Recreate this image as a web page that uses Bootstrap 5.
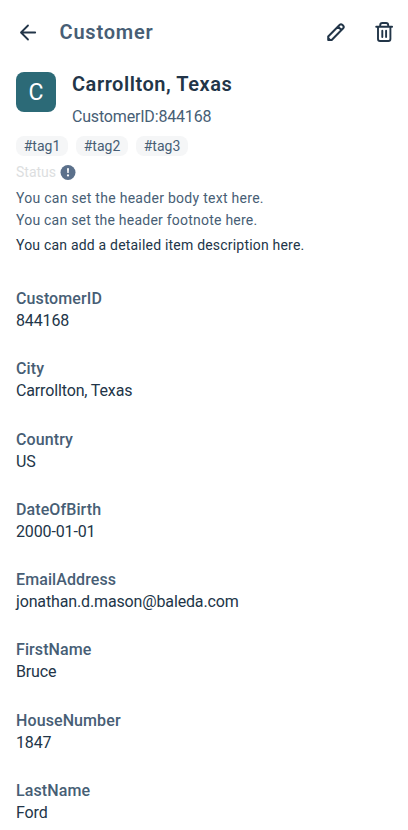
<!DOCTYPE html>
<html lang="en">
<head>
<meta charset="utf-8">
<meta name="viewport" content="width=device-width, initial-scale=1">
<title>Customer</title>
<link href="https://cdn.jsdelivr.net/npm/bootstrap@5.3.0/dist/css/bootstrap.min.css" rel="stylesheet">
<style>
:root{--ink:#223548;--slate:#475e75}
html,body{height:830px;overflow:hidden}
body{font-family:Roboto,"Noto Sans",sans-serif;color:var(--ink);background:#fff;font-size:16px;line-height:22px}
.app-bar{height:64px;padding:0 12px 0 16px}
.app-bar .btn{width:24px;height:24px;color:var(--ink);line-height:0}
.app-title{font-size:20px;font-weight:600;letter-spacing:.8px;color:var(--slate);margin-left:19.5px}
.slate{color:var(--slate)}
.avatar{width:40px;height:40px;border-radius:8px;background:#2c6a77;font-size:23px;font-weight:400;margin-top:8px;padding-top:1px}
.item-title{font-size:20px;line-height:24px;font-weight:600;letter-spacing:.54px;margin-top:8px}
.item-sub{margin-top:10px;line-height:22px;letter-spacing:-.18px}
.tag{width:52px;height:20px;line-height:20px;border-radius:8px;background:#f5f6f7;font-size:14px;color:var(--slate)}
.status{font-size:14px;line-height:20px;color:#dcdee0;margin-top:6px}
.notes{margin-top:6px}
.note{font-size:14px;line-height:21.5px;letter-spacing:.28px}
.note-foot{letter-spacing:.23px}
.note-main{letter-spacing:.2px;margin-top:4px}
.fields{margin-top:31.5px}
.field{height:70.3px}
.field dt{font-weight:500;letter-spacing:.1px}
.field dd{font-weight:400;letter-spacing:-.14px}
</style>
</head>
<body>
<header class="app-bar d-flex align-items-center">
  <button class="btn p-0 border-0" aria-label="Back"><svg width="24" height="24" viewBox="0 0 24 24" fill="none" stroke="currentColor" stroke-width="1.8" stroke-linecap="round" stroke-linejoin="round"><path d="M19.2 12.5H5.5M12 5.5l-7 7 7 7"/></svg></button>
  <h1 class="app-title mb-0">Customer</h1>
  <div class="d-flex gap-4 ms-auto">
    <button class="btn p-0 border-0" aria-label="Edit"><svg width="24" height="24" viewBox="0 0 24 24" fill="none" stroke="currentColor" stroke-width="2" stroke-linejoin="round"><path d="M4.2 20v-3.5L15.8 4.8q1.2-1.2 2.4 0l1 1q1.2 1.2 0 2.4L7.7 20zM14 6.6l3.4 3.4"/><path d="M4 16.4l3.8 3.8H4z" fill="currentColor" stroke="none"/></svg></button>
    <button class="btn p-0 border-0" aria-label="Delete"><svg width="24" height="24" viewBox="0 0 24 24" fill="none" stroke="currentColor" stroke-width="1.9" stroke-linecap="round" stroke-linejoin="round"><path d="M4.2 6.8h15.9M8.2 6.3V5.2q0-2.2 2.2-2.2h3.6q2.2 0 2.2 2.2v1.1M6 7v12q0 2 2 2h8.4q2 0 2-2V7M10.3 10.8v6.2M14.1 10.8v6.2"/></svg></button>
  </div>
</header>
<main class="px-3">
  <section class="d-flex gap-3">
    <div class="avatar d-flex align-items-center justify-content-center text-white flex-shrink-0">C</div>
    <div>
      <h2 class="item-title mb-0">Carrollton, Texas</h2>
      <div class="item-sub slate">CustomerID:844168</div>
    </div>
  </section>
  <div class="d-flex gap-2 mt-2"><span class="tag text-center">#tag1</span><span class="tag text-center">#tag2</span><span class="tag text-center">#tag3</span></div>
  <div class="status d-flex align-items-center"><span>Status</span><svg class="ms-1" width="16" height="16" viewBox="0 0 16 16"><circle cx="8" cy="8.5" r="7.5" fill="#5b708b"/><path d="M7 4.2h2l-.3 4.9H7.3z" fill="#fff"/><circle cx="8" cy="11.4" r="1.1" fill="#fff"/></svg></div>
  <div class="notes">
    <p class="note slate mb-0">You can set the header body text here.</p>
    <p class="note note-foot slate mb-0">You can set the header footnote here.</p>
    <p class="note note-main mb-0">You can add a detailed item description here.</p>
  </div>
  <dl class="fields mb-0">
    <div class="field"><dt class="slate">CustomerID</dt><dd class="mb-0">844168</dd></div>
    <div class="field"><dt class="slate">City</dt><dd class="mb-0">Carrollton, Texas</dd></div>
    <div class="field"><dt class="slate">Country</dt><dd class="mb-0">US</dd></div>
    <div class="field"><dt class="slate">DateOfBirth</dt><dd class="mb-0">2000-01-01</dd></div>
    <div class="field"><dt class="slate">EmailAddress</dt><dd class="mb-0">jonathan.d.mason@baleda.com</dd></div>
    <div class="field"><dt class="slate">FirstName</dt><dd class="mb-0">Bruce</dd></div>
    <div class="field"><dt class="slate">HouseNumber</dt><dd class="mb-0">1847</dd></div>
    <div class="field"><dt class="slate">LastName</dt><dd class="mb-0">Ford</dd></div>
  </dl>
</main>
<script src="https://cdn.jsdelivr.net/npm/bootstrap@5.3.0/dist/js/bootstrap.bundle.min.js"></script>
</body>
</html>
